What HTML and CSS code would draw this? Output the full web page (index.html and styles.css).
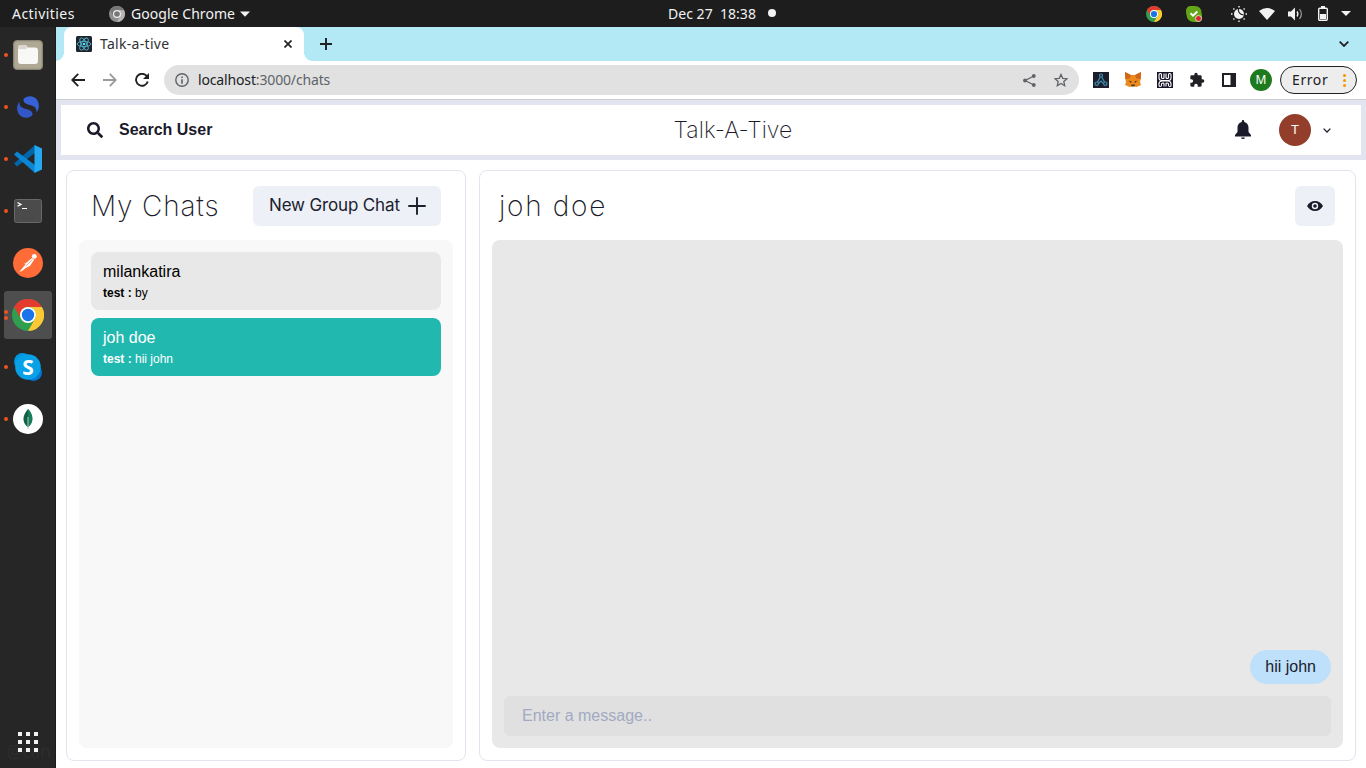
FILE: index.html
```html
<!DOCTYPE html>
<html lang="en">
<head>
<meta charset="utf-8">
<title>Talk-a-tive</title>
<link rel="stylesheet" href="styles.css">
</head>
<body>
<svg width="0" height="0" class="defs">
  <symbol id="chrome" viewBox="0 0 32 32">
    <circle cx="16" cy="16" r="16" fill="#2f9e4f"/>
    <path d="M2.1 8A16 16 0 0 1 29.9 8H16a8 8 0 0 0-6.9 12z" fill="#e33b2e"/>
    <path d="M29.9 8A16 16 0 0 1 16 32L22.9 20A8 8 0 0 0 16 8z" fill="#fcc934"/>
    <circle cx="16" cy="16" r="8" fill="#fff"/>
    <circle cx="16" cy="16" r="6.2" fill="#1a73e8"/>
  </symbol>
</svg>
<div class="desktop">
  <div class="topbar">
    <div class="top-left">
      <span class="activities">Activities</span>
      <svg class="app-icon" width="16" height="16" viewBox="0 0 16 16"><circle cx="8" cy="8" r="8" fill="#8f8f8f"/><path d="M1 4a8 8 0 0 1 14 0H8a4 4 0 0 0-3.5 6z" fill="#777"/><path d="M15 4.200A8 8 0 0 1 8 16l3.400-6A4 4 0 0 0 8 4.200z" fill="#b5b5b5"/><circle cx="8" cy="8" r="4" fill="#eee"/><circle cx="8" cy="8" r="2.800" fill="#777"/></svg>
      <span class="app-name">Google Chrome</span>
      <svg width="10" height="6" viewBox="0 0 10 6"><path d="M0 .5h10L5 5.800z" fill="#f2f2f2"/></svg>
    </div>
    <div class="clock"><span>Dec 27&nbsp; 18:38</span><i class="clock-dot"></i></div>
    <div class="tray">
      <svg class="t1" width="16" height="16"><use href="#chrome"/></svg>
      <svg class="t2" width="16" height="16" viewBox="0 0 16 16"><path d="M4 0h5q6 0 6.500 6.500 1 3.500 0 7-1.500 3-5 2.500H8Q1 15.500.5 9-.5 5 .5 2.500 1.500 0 4 0z" fill="#63a516"/><path d="M4.500 7.300L7 9.700 11.300 5.500" fill="none" stroke="#fff" stroke-width="2"/><circle cx="12.500" cy="12.500" r="3" fill="#e02030" stroke="#dcebd0" stroke-width=".9"/></svg>
      <svg class="t3" width="16" height="16" viewBox="0 0 16 16"><circle cx="8" cy="8" r="5" fill="#f2f2f2"/><path d="M7.500 2.600Q6.500 8 12.800 9" stroke="#1d1d1d" fill="none" stroke-width="1.200"/><path d="M8 0v1.500M8 14.500V16M0 8h1.500M14.500 8H16M2.400 2.400l1 1M12.600 12.600l1 1M2.400 13.600l1-1M12.600 3.400l1-1" stroke="#f2f2f2" stroke-width="1.400"/></svg>
      <svg class="t4" width="16" height="12" viewBox="0 0 16 12"><path d="M8 12L0 3Q8-3 16 3z" fill="#f2f2f2"/></svg>
      <svg class="t5" width="15" height="14" viewBox="0 0 15 14"><path d="M0 4.500h3L7 .500v13l-4-4H0z" fill="#f2f2f2"/><path d="M9 4.500q1.800 2.500 0 5" stroke="#f2f2f2" fill="none" stroke-width="1.300"/><path d="M11.500 2.200q3.800 4.800 0 9.600" stroke="#999" fill="none" stroke-width="1.200"/></svg>
      <svg class="t6" width="10" height="15" viewBox="0 0 10 15"><rect x=".7" y="2.200" width="8.600" height="12" rx="1" fill="none" stroke="#f2f2f2" stroke-width="1.400"/><path d="M3 0h4v2H3zM2 8h6v5H2z" fill="#f2f2f2"/></svg>
      <svg class="t7" width="10" height="5" viewBox="0 0 10 5"><path d="M0 0h10L5 5z" fill="#f2f2f2"/></svg>
    </div>
  </div>

  <div class="workspace">
    <div class="dock">
      <div class="dock-item run"><svg width="30" height="30" viewBox="0 0 30 30"><rect x=".5" y=".5" width="29" height="29" rx="3.500" fill="#a39d8b" stroke="#8b8575"/><rect x="2" y="2" width="26" height="26" rx="2" fill="#aea895"/><path d="M5 8q0-3 3-3h5l2 2.500h7q3 0 3 3V21q0 3-3 3H8q-3 0-3-3z" fill="#f8f8f6"/><path d="M5 9V8q0-3 3-3h5l1.500 2.500q-1 2-3 1.800z" fill="#dcd8cf"/></svg></div>
      <div class="dock-item run"><svg width="22" height="22" viewBox="0 0 22 22"><path d="M6.500 3C10-.8 16.500-.8 19.800 3.500c3 4 2.600 9.500-.3 13 .3-4.500-2-6.500-6.500-7.500C9 8 6 6.500 6.500 3z" fill="#3761d6"/><path d="M2.500 5.500C-.6 9.500-.8 14.500 2.200 18.500c3.300 4 9.800 4.600 13.300.5.500-3.500-2.500-5-6.500-6C4.500 12 2 10 2.500 5.500z" fill="#3457c8"/></svg></div>
      <div class="dock-item run"><svg width="28" height="28" viewBox="0 0 28 28"><path d="M0 18.500L3 21.500 21 8V0z" fill="#0065a9"/><path d="M0 9.500l3-3L21 20v8z" fill="#0a86d4"/><path d="M20.500 0L28 3.600v20.800L20.500 28V0z" fill="#25a8f2"/></svg></div>
      <div class="dock-item run"><svg width="28" height="24" viewBox="0 0 28 24"><rect x=".5" y=".5" width="27" height="23" rx="2" fill="#4b4b4b" stroke="#686868"/><path d="M3.500 3.500L7 5.400 3.500 7.300M8 9.500h5" stroke="#fff" fill="none" stroke-width="1.200"/></svg></div>
      <div class="dock-item"><svg width="30" height="30" viewBox="0 0 31 31"><circle cx="15.500" cy="15.500" r="15.500" fill="#ff6c37"/><circle cx="22" cy="8.700" r="2.500" fill="#fff"/><path d="M19.500 10.500l2.500 1.500-4.500 6.500-4 2-3 2.500-4 2 3.500-4.500 3-3.500-1.500-.5z" fill="#fff"/><path d="M13 19l7-7M16 13.500l-4 2.500" stroke="#ff6c37" stroke-width=".6"/></svg></div>
      <div class="dock-item run two active"><svg width="32" height="32"><use href="#chrome"/></svg></div>
      <div class="dock-item run"><svg width="28" height="28" viewBox="0 0 28 28"><circle cx="8.500" cy="8.500" r="8.500" fill="#0099e0"/><circle cx="19.500" cy="19.500" r="8.500" fill="#0078d4"/><circle cx="14" cy="14" r="12.800" fill="#08a0e6"/><text x="14" y="21.500" text-anchor="middle" class="skype-s">S</text></svg></div>
      <div class="dock-item run"><svg width="30" height="30" viewBox="0 0 30 30"><circle cx="15" cy="15" r="15" fill="#fff"/><path d="M15 5c-7 8-5 14-.3 18h.6C20 19 21.500 12 15 5z" fill="#116149"/><path d="M15 5c6.500 7 5 14 .3 18H15z" fill="#13805a"/><path d="M15 13v12" stroke="#b8c4c2" stroke-width="1"/></svg></div>
      <div class="dock-end"><span class="mark">@can</span><svg width="20" height="20" viewBox="0 0 20 20" fill="#f2f2f2"><path d="M0 0h4v4H0zM8 0h4v4H8zM16 0h4v4h-4zM0 8h4v4H0zM8 8h4v4H8zM16 8h4v4h-4zM0 16h4v4H0zM8 16h4v4H8zM16 16h4v4h-4z"/></svg></div>
    </div>

    <div class="browser">
      <div class="tabs">
        <div class="tab">
          <svg width="16" height="16" viewBox="0 0 16 16"><rect width="16" height="16" rx="1.500" fill="#20232a"/><g fill="none" stroke="#50b3cf" stroke-width=".9"><ellipse cx="8" cy="8" rx="6.800" ry="2.600"/><ellipse cx="8" cy="8" rx="6.800" ry="2.600" transform="rotate(60 8 8)"/><ellipse cx="8" cy="8" rx="6.800" ry="2.600" transform="rotate(120 8 8)"/></g><circle cx="8" cy="8" r="1.300" fill="#61dafb"/></svg>
          <span class="tab-title">Talk-a-tive</span>
          <svg width="8" height="8" viewBox="0 0 8 8"><path d="M.5.5l7 7M7.500.5l-7 7" stroke="#202124" stroke-width="1.700"/></svg>
        </div>
        <svg class="newtab" width="12" height="12" viewBox="0 0 12 12"><path d="M6 0v12M0 6h12" stroke="#202124" stroke-width="1.900"/></svg>
        <svg class="tabs-menu" width="10" height="6" viewBox="0 0 10 6"><path d="M.7.700L5 5 9.300.700" fill="none" stroke="#202124" stroke-width="1.800"/></svg>
      </div>
      <div class="toolbar">
        <svg class="back" width="14" height="14" viewBox="0 0 14 14"><path d="M14 7H1.500M7.200.800L1.200 7l6 6.200" fill="none" stroke="#202124" stroke-width="1.800"/></svg>
        <svg class="fwd" width="14" height="14" viewBox="0 0 14 14"><path d="M0 7h12.500M6.800.800l6 6.200-6 6.200" fill="none" stroke="#9a9b9d" stroke-width="1.800"/></svg>
        <svg class="reload" width="14" height="14" viewBox="0 0 14 14"><path d="M11.800 3.100A6 6 0 1 0 12.800 8.500" fill="none" stroke="#202124" stroke-width="1.900"/><path d="M14 0v6H8z" fill="#202124"/></svg>
        <div class="omnibox">
          <svg width="14" height="14" viewBox="0 0 14 14"><circle cx="7" cy="7" r="6.200" fill="none" stroke="#5f6368" stroke-width="1.400"/><path d="M6.200 3.400h1.600V5H6.200zM6.200 6.200h1.600v4.500H6.200z" fill="#5f6368"/></svg>
          <span class="url"><b>localhost</b>:3000/chats</span>
          <svg class="share" width="13" height="13" viewBox="0 0 13 13"><path d="M10.800 2L2.200 6.500l8.600 4.500" fill="none" stroke="#5f6368" stroke-width="1.300"/><g fill="#5f6368"><circle cx="10.800" cy="2" r="1.900"/><circle cx="2" cy="6.500" r="1.900"/><circle cx="10.800" cy="11" r="1.900"/></g></svg>
          <svg class="star" width="14" height="14" viewBox="0 0 14 14"><path d="M7 1.400l1.700 3.900 4.300.4-3.200 2.800.9 4.200L7 10.500l-3.700 2.200.9-4.200L1 5.700l4.300-.4z" fill="none" stroke="#5f6368" stroke-width="1.300"/></svg>
        </div>
        <div class="exts">
          <svg width="16" height="16" viewBox="0 0 16 16"><path d="M0 0h16v16H0z" fill="#1c1e2b"/><g fill="none" stroke="#3e8db0" stroke-width="1.200"><circle cx="8" cy="3.500" r="1.500"/><circle cx="3.700" cy="11.700" r="1.700"/><circle cx="12.300" cy="11.700" r="1.700"/><path d="M7.300 5L4.500 10M8.700 5l2.800 5M5.500 11.500L8 9l2.500 2.500"/></g></svg>
          <svg width="16" height="16" viewBox="0 0 16 16"><path d="M0 0l6 3h4l6-3v6l-1 4 1 3-4.500 2-2-.5h-3l-2 .5L0 13l1-3-1-4z" fill="#ec8a1e"/><path d="M0 0l6 3-1.500 3.500L.5 7zM16 0l-6 3 1.500 3.500 4 .5z" fill="#d0661c"/><path d="M3.500 8.500l3 1-.5 1.500zM12.500 8.500l-3 1 .5 1.500z" fill="#3a2c22"/><path d="M6.300 12.500h3.400v1.800H6.300z" fill="#4a3526"/></svg>
          <svg width="16" height="16" viewBox="0 0 16 16"><path d="M0 0h16v16H0z" fill="#191428"/><g fill="none" stroke="#fff" stroke-width="1.100"><path d="M2 2.500q0-1 1.200-1t1.300 1v3q0 1 1.300 1t1.200-1v-4M14 2.500q0-1-1.200-1t-1.300 1v3q0 1-1.300 1t-1.200-1v-4M2 2.500V6q0 2.500 2.500 2.500h7Q14 8.500 14 6V2.500M2 13.500V12q0-3 3-3h6q3 0 3 3v1.500q0 1-1.200 1t-1.300-1V12q0-1-1.300-1T9 12v2.500M2 13.500q0 1 1.200 1t1.300-1V12q0-1 1.300-1T7 12v2.500"/></g></svg>
          <svg width="16" height="16" viewBox="0 0 24 24"><path d="M20.500 11H19V7c0-1.100-.9-2-2-2h-4V3.500a2.500 2.500 0 0 0-5 0V5H4c-1.100 0-2 .9-2 2v3.800h1.500a2.700 2.700 0 0 1 0 5.400H2V20c0 1.100.9 2 2 2h3.800v-1.500a2.700 2.700 0 0 1 5.400 0V22H17c1.100 0 2-.9 2-2v-4h1.500a2.500 2.500 0 0 0 0-5z" fill="#202124"/></svg>
          <svg width="16" height="16" viewBox="0 0 16 16"><path d="M1 1h14v14H1z" fill="#202124"/><path d="M3 3h6.500v10H3z" fill="#fff"/></svg>
        </div>
        <span class="profile">M</span>
        <div class="error"><span>Error</span><i class="dots"></i></div>
      </div>

      <div class="page">
        <div class="header">
          <div class="search"><svg width="16" height="16" viewBox="0 0 512 512"><path d="M505 442.700L405.300 343c-4.500-4.500-10.600-7-17-7H372c27.600-35.300 44-79.700 44-128C416 93.100 322.900 0 208 0S0 93.100 0 208s93.100 208 208 208c48.300 0 92.700-16.400 128-44v16.300c0 6.400 2.500 12.500 7 17l99.700 99.700c9.400 9.400 24.600 9.400 33.900 0l28.300-28.300c9.400-9.400 9.400-24.600.1-34zM208 336c-70.700 0-128-57.200-128-128 0-70.700 57.200-128 128-128 70.700 0 128 57.200 128 128 0 70.700-57.200 128-128 128z" fill="#1a1a2b"/></svg><span>Search User</span></div>
          <div class="brand">Talk-A-Tive</div>
          <div class="account">
            <svg class="bell" width="16" height="20" viewBox="0 0 16 20"><path d="M8 0q1.200 0 1.200 1.200v.7C12 2.500 13.500 5 13.500 7.500V12l2.500 3v1.500H0V15l2.500-3V7.500C2.500 5 4 2.500 6.800 1.900v-.7Q6.800 0 8 0zM6 17.500h4q-.2 1.500-2 1.500t-2-1.500z" fill="#1a1a2b"/></svg>
            <span class="avatar">T</span>
            <svg class="chev" width="8" height="5" viewBox="0 0 8 5"><path d="M.6.600L4 4 7.400.600" fill="none" stroke="#1a202c" stroke-width="1.300"/></svg>
          </div>
        </div>
        <div class="panes">
          <div class="pane chats">
            <div class="chats-head"><h1>My Chats</h1><div class="btn"><span>New Group Chat</span><svg width="18" height="18" viewBox="0 0 18 18"><path d="M9 1v16M1 9h16" stroke="#1a202c" stroke-width="1.900" stroke-linecap="round"/></svg></div></div>
            <div class="list">
              <div class="chat"><div class="name">milankatira</div><div class="last"><b>test :</b> by</div></div>
              <div class="chat selected"><div class="name">joh doe</div><div class="last"><b>test :</b> hii john</div></div>
            </div>
          </div>
          <div class="pane conversation">
            <div class="conv-head"><h2>joh doe</h2><div class="eye"><svg width="16" height="10" viewBox="0 0 16 10"><path d="M0 5Q3 0 8 0t8 5q-3 5-8 5T0 5z" fill="#1a1a2b"/><circle cx="8" cy="5" r="2.500" fill="#1a1a2b" stroke="#edf0f7" stroke-width="1.400"/></svg></div></div>
            <div class="thread"><div class="bubble">hii john</div><div class="input">Enter a message..</div></div>
          </div>
        </div>
      </div>
    </div>
  </div>
</div>
</body>
</html>
```

FILE: styles.css
```css
* { box-sizing: border-box; }
body { margin: 0; font-family: "Liberation Sans", Arial, sans-serif; color: #1a1a2b; }
svg { display: block; flex: none; }
.defs { position: absolute; }
.desktop { width: 1366px; height: 768px; overflow: hidden; display: flex; flex-direction: column; background: #fff; }

.topbar { height: 27px; flex: none; background: #1d1d1d; color: #f2f2f2; font: 14px/27px "Noto Sans", sans-serif; display: grid; grid-template-columns: 1fr auto 1fr; align-items: center; }
.top-left { display: flex; align-items: center; padding-left: 12px; }
.activities { width: 97px; letter-spacing: .45px; }
.app-icon { margin-right: 6px; }
.app-name { width: 109px; letter-spacing: .05px; white-space: nowrap; }
.clock { display: flex; align-items: center; gap: 12px; width: 108px; margin-left: 78px; white-space: nowrap; letter-spacing: .03px; line-height: 25px; padding-bottom: 1px; }
.clock-dot { width: 8px; height: 8px; border-radius: 50%; background: #f2f2f2; flex: none; }
.tray { display: flex; align-items: center; justify-content: flex-end; padding-right: 15px; }
.t2 { margin-left: 24px; }
.t3 { margin-left: 29px; }
.t4 { margin-left: 12px; }
.t5 { margin-left: 13px; }
.t6 { margin-left: 15px; }
.t7 { margin-left: 13px; }

.workspace { flex: 1; display: flex; min-height: 0; }
.dock { width: 56px; flex: none; background: #262626; padding-top: 4px; display: flex; flex-direction: column; align-items: center; gap: 4px; border-right: 1px solid #1b1b1b; }
.dock-item { position: relative; width: 48px; height: 48px; display: flex; align-items: center; justify-content: center; border-radius: 3px; }
.run::before { content: ""; position: absolute; left: 0; top: 22px; width: 4px; height: 4px; border-radius: 50%; background: #e95420; }
.two::before { top: 19px; box-shadow: 0 6px #e95420; }
.active { background: #4e4e4e; }
.skype-s { font: bold 21px "Open Sans", sans-serif; fill: #fff; }
.dock-end { position: relative; margin-top: auto; padding-bottom: 16px; }
.mark { position: absolute; left: -11px; top: 7px; font: 18px/24px "Noto Sans", sans-serif; letter-spacing: -.5px; color: #2d2d2d; }
.dock-end svg { position: relative; }

.browser { flex: 1; min-width: 0; display: flex; flex-direction: column; }
.tabs { height: 34px; flex: none; background: #b3e8f5; display: flex; align-items: center; padding: 0 17px 0 8px; }
.tab { position: relative; width: 240px; height: 34px; background: #fff; border-radius: 8px 8px 0 0; display: flex; align-items: center; padding: 0 12px; gap: 8px; font: 14px "Noto Sans", sans-serif; color: #303134; }
.tab::before, .tab::after { content: ""; position: absolute; bottom: 0; width: 8px; height: 8px; }
.tab::before { left: -8px; background: radial-gradient(circle at 0 0, transparent 7.500px, #fff 8px); }
.tab::after { right: -8px; background: radial-gradient(circle at 100% 0, transparent 7.500px, #fff 8px); }
.tab-title { flex: 1; letter-spacing: .3px; padding-bottom: 2px; }
.newtab { margin-left: 16px; }
.tabs-menu { margin-left: auto; }
.toolbar { height: 39px; flex: none; border-bottom: 1px solid #cbcccf; display: flex; align-items: center; padding: 0 9px 0 15px; }
.fwd { margin-left: 18px; }
.reload { margin-left: 18px; }
.omnibox { width: 915px; height: 30px; margin-left: 15px; border-radius: 15px; background: #e1e1e1; display: flex; align-items: center; padding: 0 11px; font: 14px "Noto Sans", sans-serif; color: #5f6368; }
.url { margin-left: 9px; flex: 1; letter-spacing: -.15px; padding-bottom: 2px; }
.url b { font-weight: 400; color: #202124; }
.star { margin-left: 18px; }
.exts { display: flex; gap: 16px; margin-left: 14px; }
.profile { width: 22px; height: 22px; border-radius: 50%; background: #1e7a1e; color: #fff; font: 12px/22px "Noto Sans", sans-serif; text-align: center; margin-left: 13px; }
.error { margin-left: 8px; width: 77px; height: 28px; border: 1px solid #202124; border-radius: 14px; background: #ededed; display: flex; align-items: center; padding-left: 11px; font: 14px "Noto Sans", sans-serif; letter-spacing: .6px; color: #202124; }
.error span { width: 51px; padding-bottom: 2px; }
.dots { width: 3px; height: 3px; border-radius: 50%; background: #f29900; box-shadow: 0 -5px #f29900, 0 5px #f29900; }

.page { flex: 1; min-height: 0; display: flex; flex-direction: column; }
.header { height: 60px; flex: none; border: 5px solid #e2e4f0; padding: 0 30px 0 26px; display: grid; grid-template-columns: 1fr auto 1fr; align-items: center; }
.search { display: flex; align-items: center; gap: 16px; font-weight: 700; font-size: 16px; }
.brand { font: 200 23px/36px Inter, sans-serif; letter-spacing: .05px; margin-left: 48px; }
.account { display: flex; align-items: center; justify-content: flex-end; }
.avatar { width: 32px; height: 32px; margin-left: 28px; border-radius: 50%; background: #933e2b; color: #fff; text-align: center; font-size: 13px; line-height: 32px; }
.chev { margin-left: 12px; }
.panes { flex: 1; min-height: 0; display: flex; justify-content: space-between; padding: 10px 10px 7px; }
.pane { border: 1px solid #e2e4f0; border-radius: 8px; padding: 12px; display: flex; flex-direction: column; }
.chats { width: 400px; }
.conversation { width: 877px; }
.chats-head, .conv-head { height: 57px; flex: none; display: flex; justify-content: space-between; align-items: flex-start; padding: 3px 12px 0; }
h1, h2 { margin: 0; font: 200 28px/40px Inter, sans-serif; white-space: nowrap; letter-spacing: .85px; }
h2 { letter-spacing: 1.700px; }
.btn { width: 188px; height: 40px; background: #edf0f7; border-radius: 6px; display: flex; align-items: center; justify-content: space-between; padding: 0 15px 0 16px; font: 400 17px/38px Inter, sans-serif; letter-spacing: -.15px; color: #1a202c; white-space: nowrap; }
.btn span { padding-bottom: 2px; }
.list { flex: 1; background: #f8f8f8; border-radius: 8px; padding: 12px; display: flex; flex-direction: column; gap: 8px; }
.chat { height: 58px; background: #e8e8e8; border-radius: 8px; padding: 8px 12px; color: #000; }
.selected { background: #21b8b0; color: #fff; }
.name { font-size: 16px; line-height: 24px; }
.last { font-size: 12px; line-height: 18px; }
.conv-head { padding: 3px 8px 0 7px; }
.conv-head { padding-right: 8px; }
.eye { width: 40px; height: 40px; border-radius: 6px; background: #edf0f7; display: flex; align-items: center; justify-content: center; }
.thread { flex: 1; background: #e8e8e8; border-radius: 8px; padding: 12px; display: flex; flex-direction: column; justify-content: flex-end; align-items: flex-end; gap: 12px; }
.bubble { background: #bee0fb; border-radius: 20px; padding: 5px 15px; height: 34px; font-size: 16px; line-height: 24px; }
.input { width: 100%; height: 40px; border-radius: 6px; background: #e0e0e0; color: #a0aac2; padding: 0 18px; line-height: 40px; font-size: 16px; }
```
